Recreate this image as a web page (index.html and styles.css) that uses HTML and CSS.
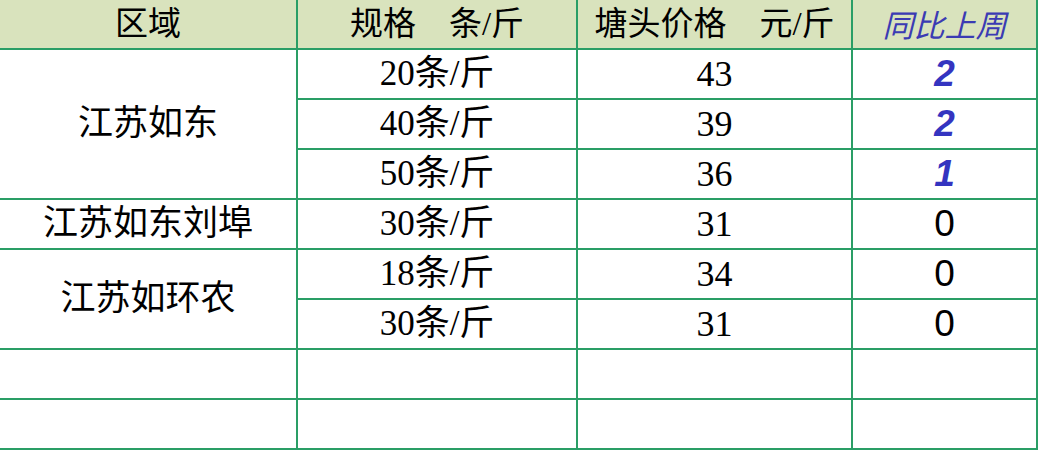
FILE: index.html
```html
<!DOCTYPE html>
<html lang="zh-CN">
<head>
<meta charset="utf-8">
<title>塘头价格</title>
<link rel="stylesheet" href="styles.css">
</head>
<body>
<table class="price-table">
  <colgroup>
    <col class="c-area">
    <col class="c-spec">
    <col class="c-price">
    <col class="c-change">
  </colgroup>
  <thead>
    <tr class="head-row">
      <th>区域</th>
      <th>规格　条/斤</th>
      <th>塘头价格　元/斤</th>
      <th class="head-change">同比上周</th>
    </tr>
  </thead>
  <tbody>
    <tr>
      <td class="area" rowspan="3">江苏如东</td>
      <td class="spec">20条/斤</td>
      <td class="num">43</td>
      <td class="chg up">2</td>
    </tr>
    <tr>
      <td class="spec">40条/斤</td>
      <td class="num">39</td>
      <td class="chg up">2</td>
    </tr>
    <tr>
      <td class="spec">50条/斤</td>
      <td class="num">36</td>
      <td class="chg up">1</td>
    </tr>
    <tr>
      <td class="area">江苏如东刘埠</td>
      <td class="spec">30条/斤</td>
      <td class="num">31</td>
      <td class="chg">0</td>
    </tr>
    <tr>
      <td class="area" rowspan="2">江苏如环农</td>
      <td class="spec">18条/斤</td>
      <td class="num">34</td>
      <td class="chg">0</td>
    </tr>
    <tr>
      <td class="spec">30条/斤</td>
      <td class="num">31</td>
      <td class="chg">0</td>
    </tr>
    <tr class="empty">
      <td></td><td></td><td></td><td></td>
    </tr>
    <tr class="empty">
      <td></td><td></td><td></td><td></td>
    </tr>
  </tbody>
</table>
</body>
</html>
```

FILE: styles.css
```css
html, body {
  margin: 0;
  padding: 0;
  background: #ffffff;
}

.price-table {
  border-collapse: collapse;
  table-layout: fixed;
  width: 1037px;
  font-family: "Liberation Serif", "Times New Roman", "DejaVu Serif", "Noto Sans CJK SC", serif;
  color: #000000;
}

.c-area { width: 297px; }
.c-spec { width: 280px; }
.c-price { width: 275px; }
.c-change { width: 185px; }

.price-table th,
.price-table td {
  border: 2px solid #2a9e66;
  padding: 0;
  text-align: center;
  vertical-align: middle;
  height: 48px;
  white-space: nowrap;
  overflow: hidden;
}

.price-table tr > :first-child,
.price-table td.area {
  border-left: none;
}

.head-row th {
  border-top: none;
  background: #d9e3bd;
  font-weight: 400;
  font-size: 33px;
  line-height: 48px;
}

.head-row th.head-change {
  font-family: "Noto Sans CJK SC", "Liberation Sans", sans-serif;
  font-style: italic;
  color: #3b3bb3;
  font-size: 31px;
}

.area {
  font-size: 35px;
  line-height: 40px;
  padding-top: 2px;
}

.spec {
  font-size: 35px;
  line-height: 40px;
  padding-top: 3px;
}

.num {
  font-size: 36px;
  line-height: 40px;
  padding-top: 3px;
}

.chg {
  font-family: "Liberation Sans", Arial, sans-serif;
  font-size: 37px;
  line-height: 40px;
  color: #000000;
  padding-top: 2px;
}

.chg.up {
  font-weight: 700;
  font-style: italic;
  color: #3434c0;
}
```
